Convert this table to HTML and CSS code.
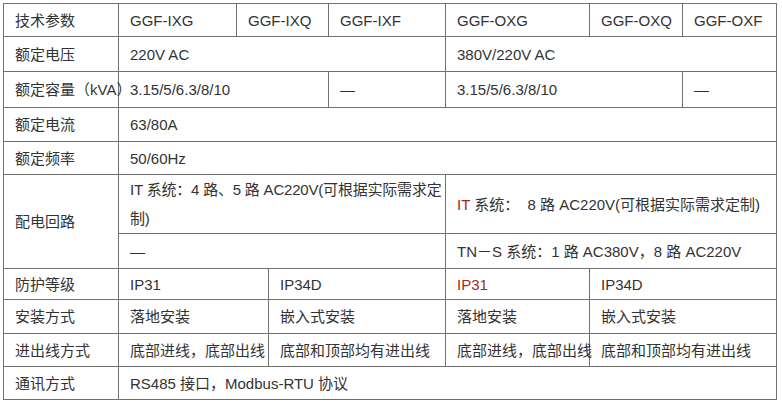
FILE: index.html
```html
<!DOCTYPE html>
<html lang="zh-CN">
<head>
    <meta charset="UTF-8">
    <meta name="viewport" content="width=device-width, initial-scale=1.0">
    <title>技术参数</title>
    <link rel="stylesheet" href="styles.css">
</head>
<body>
    <table class="spec">
        <colgroup>
            <col class="c-a">
            <col class="c-b">
            <col class="c-c">
            <col class="c-d">
            <col class="c-e">
            <col class="c-f">
            <col class="c-g">
            <col class="c-h">
        </colgroup>
        <tbody>
            <tr class="r1">
                <td>技术参数</td>
                <td>GGF-IXG</td>
                <td colspan="2">GGF-IXQ</td>
                <td>GGF-IXF</td>
                <td>GGF-OXG</td>
                <td>GGF-OXQ</td>
                <td>GGF-OXF</td>
            </tr>
            <tr class="r2">
                <td>额定电压</td>
                <td colspan="4">220V AC</td>
                <td colspan="3">380V/220V AC</td>
            </tr>
            <tr class="r3">
                <td class="nowrap">额定容量（kVA）</td>
                <td colspan="3">3.15/5/6.3/8/10</td>
                <td>—</td>
                <td colspan="2">3.15/5/6.3/8/10</td>
                <td>—</td>
            </tr>
            <tr class="r4">
                <td>额定电流</td>
                <td colspan="7">63/80A</td>
            </tr>
            <tr class="r5">
                <td>额定频率</td>
                <td colspan="7">50/60Hz</td>
            </tr>
            <tr class="r6">
                <td rowspan="2">配电回路</td>
                <td colspan="4" class="wrap">IT 系统：4 路、5 路 AC220V(可根据实际需求定<br>制)</td>
                <td colspan="3"><span class="red">IT</span> 系统：&nbsp; 8 路 AC220V(可根据实际需求定制)</td>
            </tr>
            <tr class="r7">
                <td colspan="4">—</td>
                <td colspan="3">TN－S 系统：1 路 AC380V，8 路 AC220V</td>
            </tr>
            <tr class="r8">
                <td>防护等级</td>
                <td colspan="2">IP31</td>
                <td colspan="2">IP34D</td>
                <td class="red">IP31</td>
                <td colspan="2">IP34D</td>
            </tr>
            <tr class="r9">
                <td>安装方式</td>
                <td colspan="2">落地安装</td>
                <td colspan="2">嵌入式安装</td>
                <td>落地安装</td>
                <td colspan="2">嵌入式安装</td>
            </tr>
            <tr class="r10">
                <td>进出线方式</td>
                <td colspan="2" class="nowrap">底部进线，底部出线</td>
                <td colspan="2">底部和顶部均有进出线</td>
                <td class="nowrap">底部进线，底部出线</td>
                <td colspan="2">底部和顶部均有进出线</td>
            </tr>
            <tr class="r11">
                <td>通讯方式</td>
                <td colspan="7">RS485 接口，Modbus-RTU 协议</td>
            </tr>
        </tbody>
    </table>
</body>
</html>
```

FILE: styles.css
```css
body {
    margin: 3px;
    background: #fff;
}

.spec {
    border-collapse: collapse;
    table-layout: fixed;
    width: 774px;
    font-family: "Liberation Sans", "Noto Sans CJK SC", sans-serif;
    font-size: 15px;
    color: #333;
}

.spec td {
    border: 1px solid #707070;
    padding: 0 2px 0 11px;
    line-height: 29px;
    vertical-align: middle;
    text-align: left;
    overflow: visible;
}

.c-a { width: 115px; }
.c-b { width: 118px; }
.c-c { width: 32px; }
.c-d { width: 60px; }
.c-e { width: 117px; }
.c-f { width: 144px; }
.c-g { width: 93px; }
.c-h { width: 94px; }

.r1 { height: 33px; }
.r2 { height: 35px; }
.r3 { height: 36px; }
.r4 { height: 34px; }
.r5 { height: 33px; }
.r6 { height: 58px; }
.r7 { height: 35px; }
.r8 { height: 31px; }
.r9 { height: 34px; }
.r10 { height: 33px; }
.r11 { height: 33px; }

.nowrap {
    white-space: nowrap;
}

.wrap {
    line-height: 28px;
    white-space: nowrap;
    letter-spacing: -0.2px;
}

.red {
    color: #a3281c;
}
```
